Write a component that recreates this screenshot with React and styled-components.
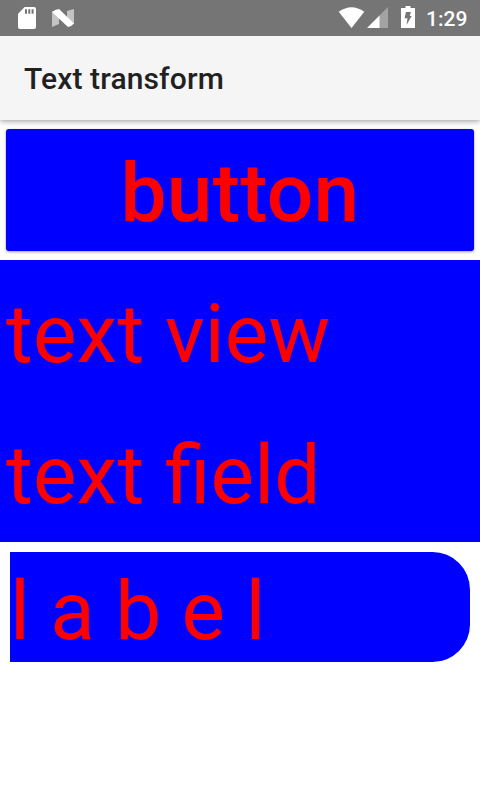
import React from "react";
import styled, { createGlobalStyle } from "styled-components";

const GlobalStyle = createGlobalStyle`
  body { margin: 0; background: #fff; font-family: Roboto, sans-serif; }
`;

const Screen = styled.div`
  width: 480px;
  height: 800px;
  display: flex;
  flex-direction: column;
  background: #fff;
  overflow: hidden;
`;

const StatusBar = styled.header`
  height: 36px;
  flex: none;
  display: flex;
  align-items: center;
  background: #757575;
  color: #fff;
`;

const StatusIcon = styled.svg`
  flex: none;
  display: block;
  margin-left: ${(p) => p.$gap}px;
  margin-top: ${(p) => p.$drop || 0}px;
`;

const Clock = styled.time`
  width: 42px;
  margin: 0 12px 0 11px;
  padding-top: 1px;
  font-size: 21px;
  font-weight: 500;
  line-height: 36px;
`;

const Spacer = styled.div`
  flex: 1;
`;

const ActionBar = styled.div`
  height: 84px;
  flex: none;
  display: flex;
  align-items: center;
  padding: 0 24px;
  background: #f5f5f5;
  box-shadow: 0 1px 6px rgba(0, 0, 0, 0.42);
  clip-path: inset(0 0 -10px 0);
`;

const Title = styled.h1`
  margin: 2px 0 0;
  font-size: 30px;
  font-weight: 500;
  line-height: 36px;
  letter-spacing: 0.12px;
  color: #212121;
`;

const Content = styled.main`
  display: flex;
  flex-direction: column;
  padding-top: 9px;
`;

const Button = styled.button`
  height: 122px;
  margin: 0 6px 9px;
  padding: 6px 0 0;
  border: 0;
  border-radius: 3px;
  background: #00f;
  color: #f00;
  font: 500 82px/110px Roboto, sans-serif;
  letter-spacing: 0.25px;
  box-shadow: 0 1px 3px rgba(0, 0, 0, 0.4);
`;

const Field = styled.div`
  height: 141px;
  box-sizing: border-box;
  padding: 19px 6px 0;
  background: #00f;
  color: #f00;
  font-size: 82px;
  line-height: 110px;
  letter-spacing: 0.15px;
  font-feature-settings: "liga", "kern";
  white-space: pre;
`;

const Label = styled.div`
  height: 110px;
  margin: 10px;
  background: #00f;
  color: #f00;
  border-radius: 0 37.5px 37.5px 0;
  font-size: 82px;
  line-height: 118px;
  white-space: pre;
`;

export default function App() {
  return (
    <>
      <GlobalStyle />
      <Screen>
        <StatusBar>
          <StatusIcon $gap={18} width="18" height="22" viewBox="0 0 18 22">
            <path fill="#fff" d="M6.7 0H16a2 2 0 0 1 2 2v18a2 2 0 0 1-2 2H2a2 2 0 0 1-2-2V6.7z" />
            <path fill="#757575" d="M7 2.3h2v4.5H7zM10.3 2.3h2v4.5h-2zM13.6 2.3h2v4.5h-2z" />
          </StatusIcon>
          <StatusIcon $gap={16} width="22" height="20" viewBox="0 0 22 20">
            <path fill="#c3c3c3" d="M0 3l7 6v7L0 19zM22 1v15l-7-6V3z" />
            <path fill="#fff" d="M0 4Q3 1.5 7 1L22 15.5Q19.5 18.5 16 19z" />
          </StatusIcon>
          <Spacer />
          <StatusIcon $gap={0} $drop={-1} width="28" height="21" viewBox="0 0 28 21">
            <path fill="#fff" d="M.7 4.7Q13.5-4.4 26.3 4.7L13.5 21z" />
          </StatusIcon>
          <StatusIcon $gap={1} $drop={-1} width="21" height="21" viewBox="0 0 21 21">
            <path fill="#a3a3a3" d="M21 0v21H12V9z" />
            <path fill="#fff" d="M12.5 8.5V21H0z" />
          </StatusIcon>
          <StatusIcon $gap={13} $drop={-2} width="14" height="22" viewBox="0 0 14 22">
            <path fill="#fff" d="M4.5 0h5v2H14v20H0V2h4.5z" />
            <path fill="#757575" d="M5 6h5L8.7 10h2L5.5 19l1-6.7H3.5z" />
          </StatusIcon>
          <Clock>1:29</Clock>
        </StatusBar>
        <ActionBar>
          <Title>Text transform</Title>
        </ActionBar>
        <Content>
          <Button>button</Button>
          <Field>text view</Field>
          <Field>text field</Field>
          <Label>l a b e l</Label>
        </Content>
      </Screen>
    </>
  );
}
